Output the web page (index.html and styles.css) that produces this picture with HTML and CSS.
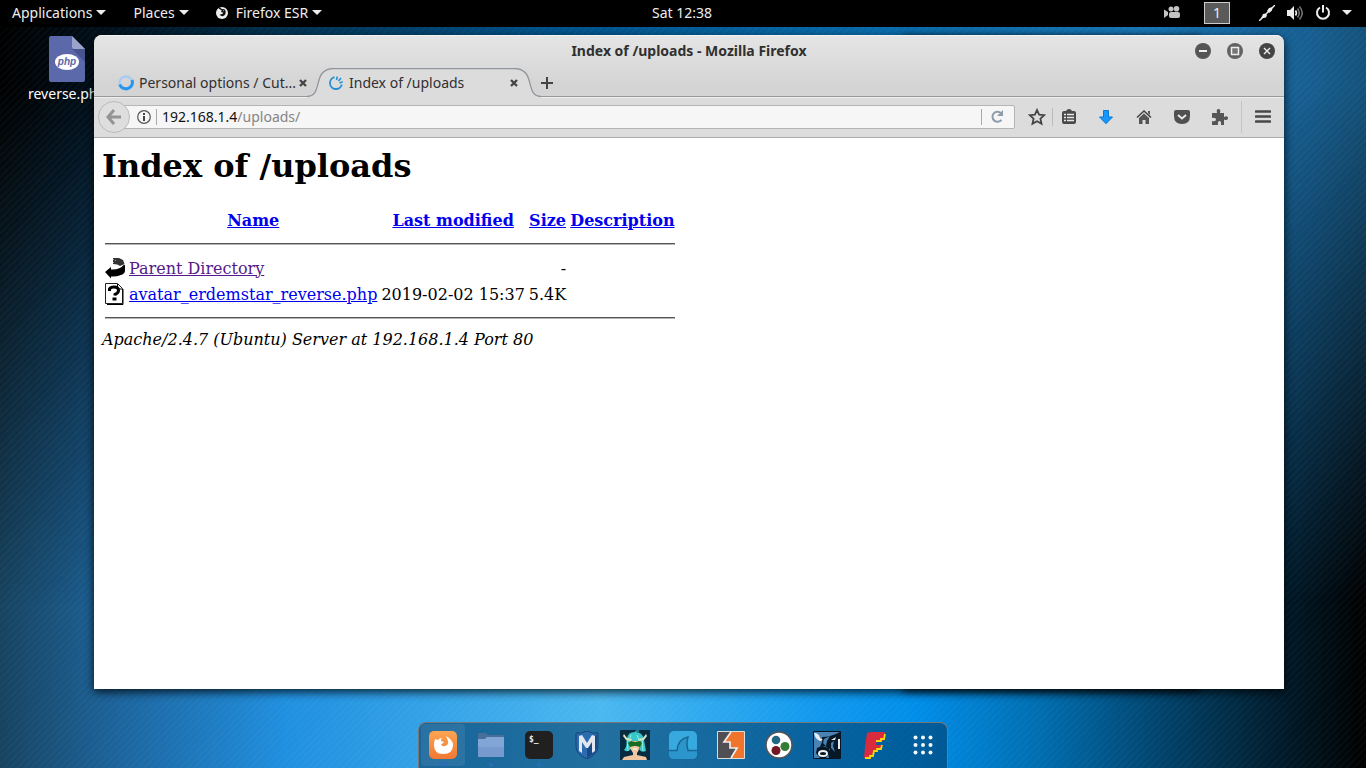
FILE: index.html
```html
<!DOCTYPE html>
<html lang="en">
<head>
<meta charset="utf-8">
<title>Index of /uploads - Mozilla Firefox</title>
<link rel="stylesheet" href="styles.css">
</head>
<body>
<div class="desktop">
  <header class="panel">
    <nav class="panel-left">
      <button class="menu">Applications<span class="caret"></span></button>
      <button class="menu">Places<span class="caret"></span></button>
      <button class="menu"><svg class="fox" width="12" height="12" viewBox="0 0 12 12"><circle cx="6" cy="6" r="6" fill="#eee"/><path d="M3 1c1 .2 2 1 2.300 1.500L7 2.600 6 4.500l2 .5-1 2.500-2 .5c2 1.500 4-.5 4-2.500 0-1-.3-2-.8-2.800" fill="none" stroke="#111" stroke-width="1.400"/></svg>Firefox ESR<span class="caret"></span></button>
    </nav>
    <button class="menu clock">Sat 12:38</button>
    <div class="panel-right">
      <svg class="camera" width="16" height="13" viewBox="0 0 16 13" fill="#c4c4c4"><path d="M0 3.500l4 2.500v3l-4 3z"/><circle cx="7" cy="3" r="2.500"/><circle cx="12.500" cy="2.800" r="2.800"/><rect x="5" y="6" width="11" height="6" rx="2"/></svg>
      <button class="workspace">1</button>
      <svg class="plug" width="16" height="16" viewBox="0 0 16 16"><path d="M0 16L16 0" stroke="#eee" stroke-width="1.500"/><path d="M2 13.500l2-4.500 2.500-.5 1.500 1.500-1 2.500zM8 6l2-3 3.500-1-.5 3.500-3 2.500z" fill="#eee"/></svg>
      <svg class="speaker" width="17" height="16" viewBox="0 0 17 16"><path d="M0 5h3l4-4v14l-4-4H0z" fill="#eee"/><path d="M8.500 5.500q1.800 2.500 0 5" fill="none" stroke="#eee" stroke-width="1.600"/><path d="M10.500 3.500q3.500 4.500 0 9M12.500 1.500q5.500 6.500 0 13" fill="none" stroke="#777" stroke-width="1.500"/></svg>
      <svg class="power" width="16" height="16" viewBox="0 0 16 16" fill="none" stroke="#eee" stroke-width="2"><path d="M5 2.500a6 6 0 1 0 6 0M8 0v7.500"/></svg>
      <span class="caret"></span>
    </div>
  </header>

  <main class="space">
    <a class="file" href="#">
      <svg width="36" height="46" viewBox="0 0 36 46"><path d="M2 0h21l13 13v31a2 2 0 0 1-2 2H2a2 2 0 0 1-2-2V2a2 2 0 0 1 2-2z" fill="#5b68a9"/><path d="M23 13h13v13z" fill="#47548f"/><path d="M23 0l13 13H25a2 2 0 0 1-2-2z" fill="#9ca3cc"/><ellipse cx="18" cy="26" rx="12" ry="8" fill="#fff"/><text x="18" y="29" text-anchor="middle" class="php">php</text></svg>
      <span>reverse.php</span>
    </a>

    <section class="window">
      <div class="titlebar">
        <span class="title">Index of /uploads - Mozilla Firefox</span>
        <div class="controls">
          <button aria-label="Minimize"><svg width="16" height="16"><circle cx="8" cy="8" r="8" fill="#555"/><path d="M4 8h8" stroke="#eee" stroke-width="2"/></svg></button>
          <button aria-label="Maximize"><svg width="16" height="16"><circle cx="8" cy="8" r="8" fill="#626262"/><rect x="4.500" y="4.500" width="7" height="7" fill="#777" stroke="#eee" stroke-width="1.500"/></svg></button>
          <button aria-label="Close"><svg width="16" height="16"><circle cx="8" cy="8" r="8" fill="#444"/><path d="M5 5l6 6M11 5l-6 6" stroke="#eee" stroke-width="1.400"/></svg></button>
        </div>
      </div>
      <div class="tabs">
        <div class="tab">
          <svg width="16" height="16" viewBox="0 0 16 16"><circle cx="8" cy="8" r="6.500" fill="none" stroke="#a9cdf0" stroke-width="2.500"/><path d="M14 5a6.500 6.500 0 1 1-12.300 4.500" fill="none" stroke="#2895ed" stroke-width="3"/></svg>
          <span class="tab-label">Personal options / Cut...</span>
          <button class="close" aria-label="Close tab"><svg width="8" height="8"><path d="M1 1l6 6M7 1L1 7" stroke="#444" stroke-width="2.300"/></svg></button>
        </div>
        <div class="tab current">
          <svg class="tab-shape" width="234" height="30" viewBox="0 0 234 30"><path d="M0 28.500C17 28.500 4 .5 27 .5H207C230 .5 217 28.500 234 28.500V30H0z" fill="#dcdcdc"/><path d="M0 28.500C17 28.500 4 .5 27 .5H207C230 .5 217 28.500 234 28.500" fill="none" stroke="#92979e" stroke-width="1.300"/></svg>
          <svg width="16" height="16" viewBox="0 0 16 16" fill="none" stroke="#238fd0" stroke-width="1.800"><path d="M6.500 2.200A6 6 0 1 0 13.800 9.500"/><path d="M8.500 5l.8-3.500M10.500 6l2.500-3M11.500 8l3.300-1.400" stroke-width="1.500"/></svg>
          <span class="tab-label">Index of /uploads</span>
          <button class="close" aria-label="Close tab"><svg width="8" height="8"><path d="M1 1l6 6M7 1L1 7" stroke="#444" stroke-width="2.300"/></svg></button>
        </div>
        <button class="new-tab" aria-label="New tab"><svg width="12" height="12"><path d="M0 6h12M6 0v12" stroke="#444" stroke-width="2"/></svg></button>
      </div>
      <div class="toolbar">
        <button class="back" aria-label="Back"><svg width="16" height="16" viewBox="0 0 16 16" fill="none" stroke="#949494" stroke-width="3"><path d="M8 1L2 8l6 7M2 8h13"/></svg></button>
        <form class="address">
          <svg width="14" height="14" viewBox="0 0 14 14"><circle cx="7" cy="7" r="6.300" fill="none" stroke="#555" stroke-width="1.200"/><path d="M7 3v2M7 6v5" stroke="#444" stroke-width="2"/></svg>
          <span class="rule"></span>
          <a class="url" href="#">192.168.1.4<span>/uploads/</span></a>
          <span class="rule"></span>
          <button type="button" class="reload" aria-label="Reload"><svg width="13" height="13" viewBox="0 0 13 13"><path d="M10.500 9.800A5 5 0 1 1 10 3.200" fill="none" stroke="#8d9dab" stroke-width="2"/><path d="M12 0v6H6z" fill="#8d9dab"/></svg></button>
        </form>
        <div class="tools">
          <button class="star" aria-label="Bookmark"><svg width="18" height="18" viewBox="0 0 18 18"><path d="M9 2l2.100 4.700 5 .5-3.700 3.500 1.100 5L9 13.200l-4.500 2.500 1.100-5L1.900 7.200l5-.5z" fill="none" stroke="#444" stroke-width="1.800"/></svg></button>
          <button class="library" aria-label="Bookmarks menu"><svg width="14" height="15" viewBox="0 0 14 15"><path d="M2 2h2q1-2 3-2t3 2h2q2 0 2 2v9q0 2-2 2H2q-2 0-2-2V4q0-2 2-2z" fill="#4a4a4a"/><path d="M2 5.500h2M5 5.500h7M2 8.500h2M5 8.500h7M2 11.500h2M5 11.500h7" stroke="#e8e8e8" stroke-width="1.500"/></svg></button>
          <button aria-label="Downloads"><svg width="14" height="14" viewBox="0 0 14 14"><path d="M4.500.5h5V7h4L7 13.700.5 7h4z" fill="#1996fa" stroke="#0879d7"/></svg></button>
          <button aria-label="Home"><svg width="16" height="14" viewBox="0 0 16 14"><path d="M1 7.500L8 1l7 6.500" fill="none" stroke="#444" stroke-width="1.500"/><path d="M12 1h2v4l-2-2zM3 8l5-4.500L13 8v6H9.500v-4h-3v4H3z" fill="#555"/></svg></button>
          <button aria-label="Pocket"><svg width="16" height="14" viewBox="0 0 16 14"><path d="M2 0h12q2 0 2 2v4q0 8-8 8T0 6V2q0-2 2-2z" fill="#505050"/><path d="M4 5l4 3.500L12 5" fill="none" stroke="#e8e8e8" stroke-width="2"/></svg></button>
          <button aria-label="Add-ons"><svg width="16" height="16" viewBox="0 0 16 16"><path d="M0 4h5q-1-4 1.500-4T8 4h4v4q4-2 4 1t-4 1.500V16H9q.5-4-1.500-4T6 16H0v-4q4 1 4-1.500T0 9z" fill="#555"/></svg></button>
          <button class="hamburger" aria-label="Open menu"><svg width="16" height="13"><path d="M1 1.500h14M1 6.500h14M1 11.500h14" stroke="#484848" stroke-width="2.600" stroke-linecap="round"/></svg></button>
        </div>
      </div>
      <article class="page">
        <h1>Index of /uploads</h1>
        <table>
          <thead>
            <tr><th class="icon"></th><th><a href="#">Name</a></th><th><a href="#">Last modified</a></th><th><a href="#">Size</a></th><th><a href="#">Description</a></th></tr>
            <tr><th colspan="5" class="line"><hr></th></tr>
          </thead>
          <tbody>
            <tr><td class="icon"><svg width="20" height="22" viewBox="0 0 20 22"><path d="M8 1h6l4 2 1.500 4-4.500 2q-2-2-7-2z" fill="#333"/><path d="M0 15l6-5v2.500q9 .5 13-5l1 1v5q0 3-4 4.500-5 2-10 1.500v2z"/><path d="M8 2h1v1H8zM10 3h1v1h-1zM8 5h1v1H8z" fill="#999"/></svg></td><td><a class="visited" href="#">Parent Directory</a></td><td></td><td class="right">-</td><td></td></tr>
            <tr><td class="icon"><svg width="20" height="22" viewBox="0 0 20 22"><path d="M.5.500h12l5 5v15H.5z" fill="#fff" stroke="#222"/><path d="M2 21.500h16V6M12.500 1v5H17" fill="none" stroke="#000"/><path d="M4.500 8V6q1-2 4.500-2 4.500 0 4.500 3.500 0 2.500-3.500 4v1" fill="none" stroke="#000" stroke-width="3"/><path d="M7.500 14.500h4v3h-4z"/></svg></td><td><a href="#">avatar_erdemstar_reverse.php</a></td><td class="right">2019-02-02 15:37</td><td class="right">5.4K</td><td></td></tr>
            <tr><td colspan="5" class="line"><hr></td></tr>
          </tbody>
        </table>
        <address>Apache/2.4.7 (Ubuntu) Server at 192.168.1.4 Port 80</address>
      </article>
    </section>

    <nav class="dock">
      <button class="active" aria-label="Firefox"><svg width="28" height="28" viewBox="0 0 28 28"><defs><linearGradient id="or" x2="0" y2="1"><stop stop-color="#fba552"/><stop offset="1" stop-color="#f17832"/></linearGradient></defs><rect width="28" height="28" rx="5" fill="url(#or)"/><path d="M6 8l3 1q1-2 4-2-1 1-1 3l3 1q-1 2-3 2 1 3 4 2 4-1 3-5-1-3-2-5 7 4 7 9 0 9-10 9-9 0-9-9 0-3 1-6z" fill="#fff"/></svg><i></i><i></i></button>
      <button aria-label="Files"><svg width="28" height="26" viewBox="0 0 28 26"><path d="M1 1h8l2 2h16v6H1z" fill="#486e99"/><path d="M1 7h7l2-2h17v20H1z" fill="#81a5d5"/><path d="M1 15h26v10H1z" fill="#769acd"/></svg><i></i></button>
      <button aria-label="Terminal"><svg width="28" height="28" viewBox="0 0 28 28"><rect width="28" height="28" rx="5" fill="#202020"/><text x="4" y="11" class="prompt">$_</text></svg><i></i></button>
      <button aria-label="Metasploit"><svg width="24" height="28" viewBox="0 0 24 28"><path d="M12 0q6 3 11 2v14q0 7-11 12Q1 23 1 16V2q5 1 11-2z" fill="#2b6cae" stroke="#164379"/><path d="M12 14v13q10-5 10-11V3z" fill="#164b88"/><path d="M4 20V5l3-1 5 8 5-8 3 1v15l-3 2V11l-4 6h-2l-4-6v11z" fill="#e2e6ef"/></svg></button>
      <button aria-label="Armitage"><svg width="30" height="30" viewBox="0 0 30 30"><path d="M0 0h30v30H0z" fill="#072c42"/><path d="M7 8q1-6 8-6 8 0 9 8l2 11q-5 2-7-2h-8q-4 4-7 1 3-3 3-12z" fill="#37c7c9"/><path d="M4 4l3 4 5 1-1 2-5-1-3-4zM26 4l-3 4-5 1 1 2 5-1 3-4z" fill="#dce5bd"/><path d="M15 3q0-3 4-2" fill="none" stroke="#37c7c9"/><path d="M10 11h10v7l-3 5h-4l-3-5z" fill="#f0c99f"/><path d="M8 13l3-2 4 1 5-1 2 2-2 4-4-1h-2l-4 1z" fill="#186b20"/><path d="M13 21h4v4l9 2 1 3H2l2-3 9-2z" fill="#efc6a0"/><path d="M13 19h4" stroke="#fff"/><path d="M20 17l-1 3" stroke="#a74b85"/><path d="M7 9l1 12M22 9l1 12M11 5l-2 6M17 5l2 5" stroke="#97ede0"/></svg></button>
      <button aria-label="Wireshark"><svg width="28" height="28" viewBox="0 0 28 28"><rect width="28" height="28" rx="5" fill="#38a9df"/><path d="M0 20h8Q9 8 19 6q-2 7 0 14h9v3q0 5-5 5H5q-5 0-5-5z" fill="#2c95cb"/><path d="M0 19.500h8Q9 8 19 6q-2 7 0 13.500h9" fill="none" stroke="#176894" stroke-width="1.500"/></svg></button>
      <button aria-label="Burp Suite"><svg width="28" height="28" viewBox="0 0 28 28"><path d="M.5.500h27v27H.5z" fill="#ef742c" stroke="#ddd"/><path d="M1 1h13L7 11h6v6h7l-6 10H1z" fill="#505054"/><path d="M14 1L7 11h6v6h7l-6 10" fill="none" stroke="#eee" stroke-width="1.700"/></svg></button>
      <button aria-label="Maltego"><svg width="28" height="28" viewBox="0 0 28 28"><circle cx="14" cy="14" r="13" fill="#fff" stroke="#555" stroke-width="1.500"/><circle cx="11" cy="9" r="4.300" fill="#216783"/><circle cx="20" cy="15.500" r="4.500" fill="#347d36"/><circle cx="11" cy="19.500" r="4.500" fill="#741725"/></svg></button>
      <button aria-label="BeEF"><svg width="28" height="28" viewBox="0 0 28 28"><path d="M.5.500h27v27H.5z" fill="#4a83b3" stroke="#081423"/><path d="M9 6q9 0 18-5v26H16l-1-5 2-4-5-3-5 1 2-5z" fill="#071829"/><path d="M11 8l6-3-3 5-1 5-3-3zM18 12l3-2-1 5 2 6-4-4z" fill="#4a83b3"/><path d="M1 2q5 0 6 5l3 2-3 1Q2 8 1 2zM18 9l5-3-1 3zM25 8h2v10h-2z" fill="#e6edf1"/><path d="M4 17l5-2 7 2v5l-3 5H7l-4-5z" fill="#071829"/><ellipse cx="10" cy="22.500" rx="4" ry="2.500" fill="#071829" stroke="#f2f2f2" stroke-width="2"/></svg></button>
      <button aria-label="Faraday"><svg width="26" height="28" viewBox="0 0 26 28"><path d="M5 2l4-1h14l-2 9h-6l-1 4h6l-2 5h-6l-2 6-3 2H2L3 16z" fill="#d92b3d"/><path d="M23 3l-1 5h-3v2h-5M20 14l-1 4h-4v2h-3l-1 5H8v2H3" fill="none" stroke="#f7d80b" stroke-width="1.800"/></svg></button>
      <button aria-label="Show applications"><svg width="20" height="20" viewBox="0 0 20 20" fill="#f4f8fa"><circle cx="2.500" cy="2.500" r="2"/><circle cx="10" cy="2.500" r="2"/><circle cx="17.500" cy="2.500" r="2"/><circle cx="2.500" cy="10" r="2"/><circle cx="10" cy="10" r="2"/><circle cx="17.500" cy="10" r="2"/><circle cx="2.500" cy="17.500" r="2"/><circle cx="10" cy="17.500" r="2"/><circle cx="17.500" cy="17.500" r="2"/></svg></button>
    </nav>
  </main>
</div>
</body>
</html>
```
FILE: styles.css
```css
* { box-sizing: border-box; }
body { margin: 0; font: 14px/20px "Noto Sans", sans-serif; }
button { padding: 0; border: 0; background: none; color: inherit; font: inherit; }
svg { display: block; flex: none; }

.desktop { display: flex; flex-direction: column; min-height: 100vh; background: #000; }

/* Top panel */
.panel { display: grid; grid-template-columns: 1fr auto 1fr; align-items: center; height: 27px; padding: 0 14px 2px 12px; background: #000; color: #eee; }
.panel-left, .panel-right, .menu { display: flex; align-items: center; }
.panel-left { gap: 27px; }
.menu { gap: 4px; white-space: nowrap; }
.fox { margin-right: 4px; }
.caret { border: 5px solid transparent; border-top-color: #eee; border-bottom: 0; }
.panel-right { justify-content: flex-end; }
.workspace { width: 26px; height: 22px; margin: 0 29px 0 24px; border: 1px solid #ccc; background: #5a5a5a; }
.speaker { margin: 0 11px 0 12px; }
.power { margin-right: 11px; }

/* Wallpaper */
.space { position: relative; flex: 1; display: flex; flex-direction: column; padding: 8px 82px 0 94px; isolation: isolate; overflow: hidden;
  background: linear-gradient(to right, #17435f 0, #1c6299 8%, #2090e0 21%, #4bb8f0 44%, #149bee 59%, #008eea 67%, #006eb0 76%, #01436c 85%, #011a29 94%, #000 100%); }
.space::before { content: ""; position: absolute; inset: 0; z-index: -2;
  background: linear-gradient(to right, #000 0, #000c15 6%, #00314f 20%, #00528a 40%, #086cac 65%, #1878b8 84%, #175e90 96%, #14527a 100%);
  mask-image: linear-gradient(#000 0, #000 8%, transparent 78%); }
.space::after { content: ""; position: absolute; inset: 0; z-index: -1;
  background: repeating-linear-gradient(135deg, #ffffff06 0 2px, transparent 2px 5px); }
.file { position: absolute; top: 9px; left: 28px; display: flex; flex-direction: column; align-items: center; gap: 2px; color: #fff; text-decoration: none; }
.php { font: italic bold 10px "Liberation Sans", sans-serif; fill: #5b68a9; }

/* Browser window */
.window { position: relative; display: flex; flex-direction: column; flex: 1; border-radius: 8px 8px 0 0; background: linear-gradient(#e5e5e5, #d4d4d4 50px); box-shadow: 0 3px 10px #000c; }
.window::before { content: ""; position: absolute; inset: 0 7% 0 68%; z-index: -1; box-shadow: 0 2px 8px #000c; }
.titlebar { display: grid; place-items: center; height: 32px; padding-bottom: 2px; border-top: 1px solid #f3f3f3; border-radius: 8px 8px 0 0; color: #303030; font-weight: bold; }
.title, .controls { grid-area: 1 / 1; }
.controls { display: flex; gap: 16px; justify-self: end; margin-right: 9px; }
.tabs { display: flex; height: 30px; padding-left: 14px; border-bottom: 1px solid #999; color: #303030; }
.tab { position: relative; display: flex; align-items: center; gap: 5px; width: 199px; padding: 2px 0 0 10px; }
.tab > * { position: relative; }
.tab-label { flex: 1; min-width: 0; white-space: nowrap; }
.close { padding: 4px 0; }
.tab:first-child .close { z-index: 1; }
.current { width: 234px; padding: 2px 23px 0 21px; }
.tab .tab-shape { position: absolute; left: 0; top: 1px; }
.new-tab { padding: 2px 0 0; }
.toolbar { display: flex; align-items: center; height: 41px; padding: 0 0 2px 4px; border-bottom: 1px solid #aaa; background: #dcdcdc; border-top: 1px solid #eee; }
.back { z-index: 1; display: grid; place-items: center; width: 32px; height: 32px; border: 1px solid #bbb; border-radius: 50%; background: #dedede; }
.address { display: flex; flex: 1; align-items: center; gap: 5px; height: 24px; margin-left: -10px; padding-left: 16px; border: 1px solid #b5b5b5; border-radius: 0 2px 2px 0; background: #f6f6f6; }
.rule { width: 1px; height: 16px; background: #aaa; }
.url { flex: 1; color: #111; text-decoration: none; }
.url span { color: #858585; }
.reload { padding: 0 10px 0 4px; }
.tools { display: flex; align-items: center; margin-left: 7px; }
.tools button { display: grid; place-items: center; width: 38px; height: 32px; }
.tools .star { width: 30px; }
.tools .library { width: 32px; height: 18px; margin-right: 3px; border-left: 1px solid #bbb; }
.tools .hamburger { width: 43px; margin-left: 2px; border-left: 1px solid #c4c4c4; }

/* Directory listing */
.page { flex: 1; padding: 9px 8px 8px; background: #fff; color: #000; font: 16px/19px "DejaVu Serif", serif; }
.page h1 { margin: 0 0 21px; font-size: 32px; line-height: 38px; }
.page table { border-collapse: separate; border-spacing: 2px; }
.page th, .page td { height: 24px; padding: 1px; white-space: nowrap; }
.page a { color: #00e; text-decoration: underline; }
.page .visited { color: #551a8b; }
.icon { width: 22px; }
.right { text-align: right; }
.page .line { height: 20px; }
.page hr { margin: 8px 0; border: 0; border-top: 1px solid #555; border-bottom: 1px solid #b5b5b5; }

/* Dock */
.dock { display: flex; align-self: center; height: 46px; margin: 33px 0 0 -12px; border: solid #777; border-width: 1px 1px 0; border-radius: 8px 8px 0 0; background: #00355d8c; }
.dock button { position: relative; display: flex; align-items: center; justify-content: center; width: 48px; padding-bottom: 1px; }
.dock .active { width: 44px; margin: 1px 2px 2px; border-radius: 4px; background: #ffffff14; }
.dock i { position: absolute; bottom: 1px; left: 22px; width: 4px; height: 4px; border-radius: 50%; background: #2b6cb8; }
.dock .active i { bottom: 0; left: 17px; }
.dock .active i + i { left: 23px; }
.prompt { font: bold 8px "DejaVu Sans Mono", monospace; fill: #eee; }
```
